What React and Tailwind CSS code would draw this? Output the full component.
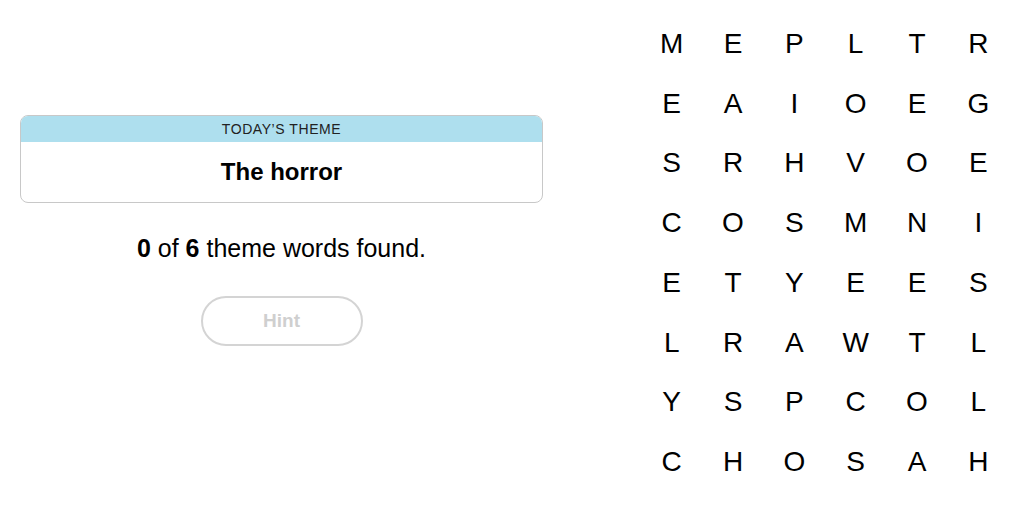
const rows = [
  "MEPLTR",
  "EAIOEG",
  "SRHVOE",
  "COSMNI",
  "ETYEES",
  "LRAWTL",
  "YSPCOL",
  "CHOSAH",
];

export default function App() {
  return (
    <div className="flex h-[521px] w-[1024px] bg-white text-black font-['Liberation_Sans',sans-serif]">
      <div className="w-[563px] pl-5 pr-5 pt-[115px]">
        <div className="rounded-lg border border-[#c8c8c8] overflow-hidden">
          <div className="h-[26px] bg-[#aedfee] text-center text-[14px] leading-[26px] tracking-[0.04em] text-[#222]">
            TODAY’S THEME
          </div>
          <div className="h-[60px] text-center text-[24px] font-bold leading-[60px]">
            The horror
          </div>
        </div>
        <p className="mt-[31px] text-center text-[25px] leading-[28px]">
          <b>0</b> of <b>6</b> theme words found.
        </p>
        <div className="mt-[34px] flex justify-center">
          <button className="h-[50px] w-[162px] rounded-full border-2 border-[#d4d4d4] text-[19px] font-bold text-[#cfcfcf]">
            Hint
          </button>
        </div>
      </div>
      <div className="ml-[78px] pt-[14px]">
        <div className="grid grid-cols-6 w-[368px]">
          {rows.map((r, i) =>
            r.split("").map((ch, j) => (
              <div
                key={i + "-" + j}
                className="h-[59.75px] flex items-center justify-center text-[28px] leading-none"
              >
                {ch}
              </div>
            ))
          )}
        </div>
      </div>
    </div>
  );
}
